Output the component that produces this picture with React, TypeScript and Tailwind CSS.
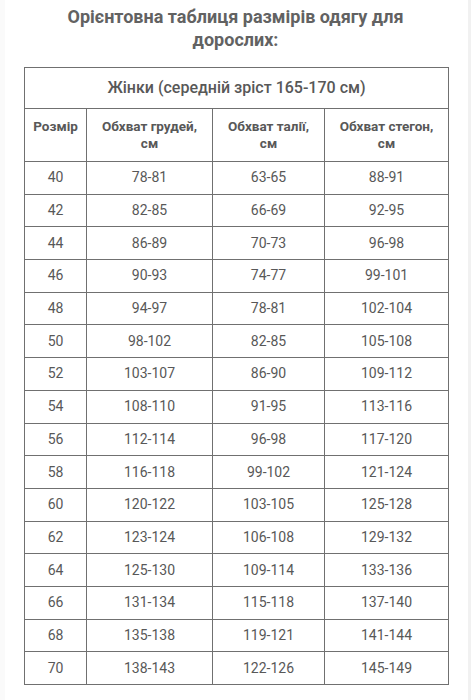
import React from "react";

const rows: [string, string, string, string][] = [
  ["40", "78-81", "63-65", "88-91"],
  ["42", "82-85", "66-69", "92-95"],
  ["44", "86-89", "70-73", "96-98"],
  ["46", "90-93", "74-77", "99-101"],
  ["48", "94-97", "78-81", "102-104"],
  ["50", "98-102", "82-85", "105-108"],
  ["52", "103-107", "86-90", "109-112"],
  ["54", "108-110", "91-95", "113-116"],
  ["56", "112-114", "96-98", "117-120"],
  ["58", "116-118", "99-102", "121-124"],
  ["60", "120-122", "103-105", "125-128"],
  ["62", "123-124", "106-108", "129-132"],
  ["64", "125-130", "109-114", "133-136"],
  ["66", "131-134", "115-118", "137-140"],
  ["68", "135-138", "119-121", "141-144"],
  ["70", "138-143", "122-126", "145-149"],
];

const cell = "border border-[#707070] text-center align-middle";
const head = `${cell} h-[53px] text-[13.5px] font-bold leading-[17px]`;

export default function App() {
  return (
    <div
      className="relative min-h-[700px] w-full bg-white"
      style={{ fontFamily: "Roboto, 'Noto Sans', sans-serif" }}
    >
      {/* faint page edges */}
      <div className="absolute left-0 top-0 h-full w-[5px] bg-[#fafafa]" />
      <div className="absolute right-0 top-0 h-full w-[3px] bg-[#f1f1f1]" />

      <h2 className="pt-[5px] px-10 text-center text-[18px] font-bold leading-[23px] text-[#626262]">
        Орієнтовна таблиця размірів одягу для дорослих:
      </h2>

      <table className="mt-[16px] ml-[24px] w-[424px] table-fixed border-collapse text-[#585858]">
        <colgroup>
          <col className="w-[62px]" />
          <col className="w-[126px]" />
          <col className="w-[112px]" />
          <col className="w-[124px]" />
        </colgroup>
        <thead>
          <tr>
            <th colSpan={4} className={`${cell} h-[41px] text-[16px] font-medium`}>
              Жінки (середній зріст 165-170 см)
            </th>
          </tr>
          <tr>
            <th className={`${head} pb-[17px]`}>Розмір</th>
            <th className={head}>
              Обхват грудей,
              <br />
              см
            </th>
            <th className={head}>
              Обхват талії,
              <br />
              см
            </th>
            <th className={head}>
              Обхват стегон,
              <br />
              см
            </th>
          </tr>
        </thead>
        <tbody className="text-[14px]">
          {rows.map((r) => (
            <tr key={r[0]} className="h-[32.7px]">
              {r.map((v, i) => (
                <td key={i} className={cell}>
                  {v}
                </td>
              ))}
            </tr>
          ))}
        </tbody>
      </table>
    </div>
  );
}
